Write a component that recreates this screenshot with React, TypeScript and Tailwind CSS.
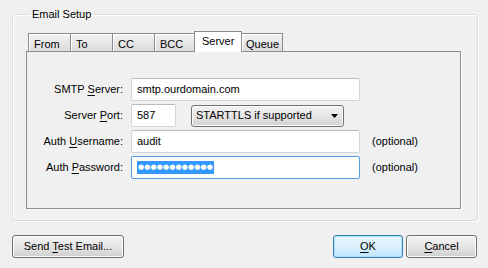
const tabs = [
  { label: 'From', w: 'w-[43px]' },
  { label: 'To', w: 'w-[43px]' },
  { label: 'CC', w: 'w-[43px]' },
  { label: 'BCC', w: 'w-[43px]' },
];

const Mn = ({ children }: { children: string }) => <span className="underline underline-offset-[2px]">{children}</span>;

const TextBox = ({ value, w, focused }: { value?: string; w: string; focused?: boolean }) => (
  <div
    className={`${w} h-[23px] bg-white rounded-[2px] border flex items-center pl-[5px] ${
      focused ? 'border-[#3d7bad]' : 'border-[#d2d5da] border-t-[#b9bdc3]'
    }`}
  >
    {value}
  </div>
);

export default function App() {
  return (
    <div className="w-[488px] h-[268px] bg-[#f0f0f0] text-[11px] leading-[13px] text-black font-['Liberation_Sans',Arial,sans-serif] overflow-hidden">
      <div className="px-[12px] pt-[8px]">
        {/* Group box */}
        <fieldset className="w-[466px] border border-[#d5dfe5] rounded-[3px] shadow-[1px_1px_0_#fff,inset_1px_1px_0_#fff] pl-[13px] pb-[11px]">
          <legend className="ml-[4px] px-[2px]">Email Setup</legend>

          {/* Tab strip */}
          <div className="flex items-end mt-[10px] ml-[2px] relative z-10">
            {tabs.map((t, i) => (
              <div
                key={t.label}
                className={`${t.w} h-[18px] ${i > 0 ? '-ml-px' : ''} border border-b-0 border-[#898c95] bg-gradient-to-b from-[#f3f3f3] to-[#dcdcdc] pl-[5px] pt-[4px] shadow-[inset_1px_1px_0_#fff]`}
              >
                {t.label}
              </div>
            ))}
            <div className="w-[48px] h-[21px] -ml-[3px] -mb-px border border-b-0 border-[#898c95] bg-white pl-[7px] pt-[3px] relative z-10">
              Server
            </div>
            <div className="w-[42px] h-[18px] -ml-px border border-b-0 border-[#898c95] bg-gradient-to-b from-[#f3f3f3] to-[#dcdcdc] pl-[4px] pt-[4px] shadow-[inset_1px_1px_0_#fff]">
              Queue
            </div>
          </div>

          {/* Tab panel */}
          <div className="w-[435px] h-[158px] border border-[#898c95] shadow-[1px_1px_0_#fff] pt-[26px] flex flex-col gap-[3px]">
            <div className="flex items-center">
              <div className="w-[97px] text-right pr-px">SMTP <Mn>S</Mn>erver:</div>
              <div className="ml-[7px]">
                <TextBox value="smtp.ourdomain.com" w="w-[229px]" />
              </div>
            </div>
            <div className="flex items-center">
              <div className="w-[97px] text-right pr-px">Server <Mn>P</Mn>ort:</div>
              <div className="ml-[7px]">
                <TextBox value="587" w="w-[45px]" />
              </div>
              <div className="ml-[15px] w-[153px] h-[22px] rounded-[3px] border border-[#707070] bg-gradient-to-b from-[#f2f2f2] via-[#e6e6e6] to-[#d0d0d0] shadow-[inset_0_0_0_1px_#fcfcfc] flex items-center justify-between pl-[4px] pr-[5px]">
                <span>STARTTLS if supported</span>
                <svg width="7" height="4" viewBox="0 0 7 4">
                  <path d="M0 0h7L3.5 4z" fill="#000" />
                </svg>
              </div>
            </div>
            <div className="flex items-center">
              <div className="w-[97px] text-right pr-px">Auth <Mn>U</Mn>sername:</div>
              <div className="ml-[7px]">
                <TextBox value="audit" w="w-[229px]" />
              </div>
              <div className="ml-[12px]">(optional)</div>
            </div>
            <div className="flex items-center">
              <div className="w-[97px] text-right pr-px">Auth <Mn>P</Mn>assword:</div>
              <div className="ml-[7px]">
                <div className="w-[229px] h-[23px] bg-white rounded-[2px] border border-[#569de5] flex items-center pl-[5px]">
                  <span className="bg-[#3399ff] text-white h-[13px] flex items-center px-px text-[7px] tracking-[0.15px] font-['DejaVu_Sans',sans-serif]">
                    ●●●●●●●●●●●●
                  </span>
                </div>
              </div>
              <div className="ml-[12px]">(optional)</div>
            </div>
          </div>
        </fieldset>
      </div>

      {/* Dialog buttons */}
      <div className="flex justify-between items-center mt-[14px] pl-[12px] pr-[11px]">
        <button className="w-[112px] h-[23px] rounded-[3px] border border-[#707070] bg-gradient-to-b from-[#f2f2f2] via-[#e6e6e6] to-[#cfcfcf] shadow-[inset_0_0_0_1px_#fcfcfc]">
          Send <Mn>T</Mn>est Email...
        </button>
        <div className="flex gap-[3px]">
          <button className="w-[70px] h-[23px] rounded-[3px] border border-[#3c7fb1] bg-gradient-to-b from-[#eaf6fd] via-[#d9f0fc] to-[#bee6fd] shadow-[inset_0_0_0_1px_#a6e0fb]">
            <Mn>O</Mn>K
          </button>
          <button className="w-[71px] h-[23px] rounded-[3px] border border-[#707070] bg-gradient-to-b from-[#f2f2f2] via-[#e6e6e6] to-[#cfcfcf] shadow-[inset_0_0_0_1px_#fcfcfc]">
            <Mn>C</Mn>ancel
          </button>
        </div>
      </div>
    </div>
  );
}
